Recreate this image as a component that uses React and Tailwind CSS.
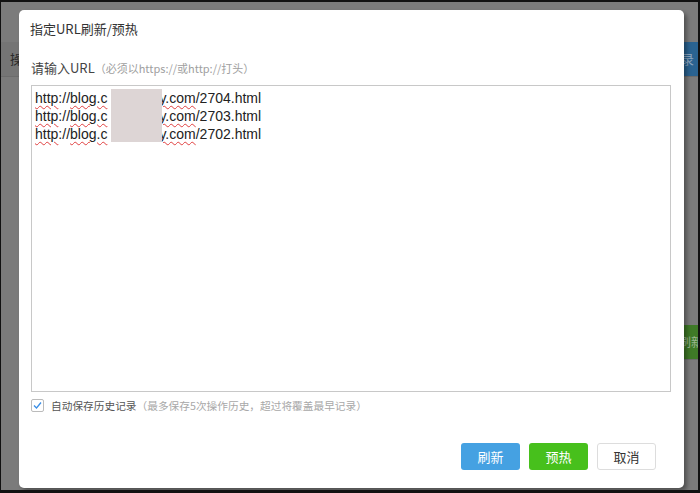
import React from "react";

const cjk = { fontFamily: '"Noto Sans CJK SC", "Noto Sans", sans-serif' };
const latin = { fontFamily: '"Liberation Sans", Arial, "Noto Sans CJK SC", sans-serif' };

const urls = ["2704", "2703", "2702"];

function UrlLine({ id }) {
  return (
    <div className="h-[18px] leading-[18px] whitespace-nowrap">
      <span className="underline decoration-wavy decoration-[#e04040] decoration-1 underline-offset-2">http</span>
      ://
      <span className="underline decoration-wavy decoration-[#e04040] decoration-1 underline-offset-2">
        blog.c<span className="inline-block w-[52px]"></span>y.com
      </span>
      /{id}.html
    </div>
  );
}

export default function App() {
  return (
    <div className="relative w-[700px] h-[493px] overflow-hidden bg-[#7b7b7b] border-t-2 border-l border-r-2 border-b-[3px] border-[#111]" style={cjk}>
      {/* page behind the overlay */}
      <div className="flex justify-between mt-[40px] h-[35px]">
        <div className="w-[18px] bg-[#757575] border-b border-[#6c6c6c] flex items-center justify-end overflow-hidden">
          <span className="text-[13px] text-[#2b2b2b] -mr-[4px] whitespace-nowrap">操</span>
        </div>
        <div className="w-[15px] bg-[#2a6391] border-b border-[#6c6c6c] flex items-center overflow-hidden">
          <span className="text-[13px] text-[#8aa6c0] -ml-[2px] whitespace-nowrap">录</span>
        </div>
      </div>
      <div className="flex justify-end mt-[248px] h-[35px]">
        <div className="w-[15px] bg-[#3f7a27] border-b border-[#6c6c6c] flex items-center overflow-hidden">
          <span className="text-[12px] text-[#9bb58f] -ml-[4px] whitespace-nowrap">刷新</span>
        </div>
      </div>

      {/* dialog */}
      <div className="absolute left-[18px] top-[8px] w-[665px] h-[478px] bg-white rounded-[5px] shadow-[3px_3px_4px_rgba(0,0,0,0.35)] flex flex-col">
        <div className="h-[38px] pl-[11px] pt-[9px] text-[13px] leading-[20px] text-[#333]">指定URL刷新/预热</div>
        <div className="px-[12px] pt-[10px] flex flex-col">
          <div className="text-[13px] leading-[20px] text-[#444] h-[27px]">
            请输入URL<span className="text-[11px] text-[#a0a0a0]">（必须以https://或http://打头）</span>
          </div>
          <div className="relative w-[640px] h-[307px] border border-[#c8c8c8] pl-[3px] pt-[3px] text-[14px] text-[#222]" style={latin}>
            {urls.map((u) => (
              <UrlLine key={u} id={u} />
            ))}
            <div className="absolute left-[79px] top-[3px] w-[51px] h-[53px] bg-[#ddd5d5]"></div>
          </div>
          <div className="flex items-center h-[13px] mt-[7px]">
            <div className="w-[13px] h-[13px] border border-[#bbb] rounded-[2px] flex items-center justify-center">
              <svg width="9" height="9" viewBox="0 0 9 9">
                <path d="M1 4.5 L3.5 7 L8 1.5" fill="none" stroke="#3a8ee6" strokeWidth="1.3" />
              </svg>
            </div>
            <span className="ml-[7px] text-[10.7px] leading-[13px] text-[#555]">
              自动保存历史记录<span className="text-[#a8a8a8]">（最多保存5次操作历史，超过将覆盖最早记录）</span>
            </span>
          </div>
        </div>
        <div className="flex justify-end gap-[9px] pr-[28px] mt-[31px]">
          <button className="w-[59px] h-[27px] rounded-[3px] bg-[#45a1e2] text-white text-[13px]">刷新</button>
          <button className="w-[59px] h-[27px] rounded-[3px] bg-[#47c01c] text-white text-[13px]">预热</button>
          <button className="w-[59px] h-[27px] rounded-[3px] bg-white border border-[#ddd] text-[#333] text-[13px]">取消</button>
        </div>
      </div>
    </div>
  );
}
